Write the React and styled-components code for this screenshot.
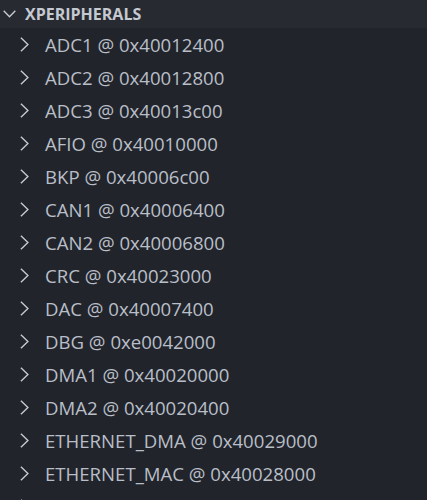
import React from "react";
import styled, { createGlobalStyle } from "styled-components";

const GlobalStyle = createGlobalStyle`
  html, body {
    margin: 0;
    padding: 0;
    background: #21252b;
    overflow: hidden;
  }
`;

const Panel = styled.div`
  width: 427px;
  height: 500px;
  background: #21252b;
  font-family: "Open Sans", "Noto Sans", sans-serif;
  overflow: hidden;
`;

const Header = styled.div`
  display: flex;
  align-items: center;
  height: 28px;
  background: #272a31;
  color: #c5c9d1;
  font-weight: 700;
  font-size: 16px;
  gap: 9px;
  padding-left: 3px;
`;

const List = styled.div`
  display: flex;
  flex-direction: column;
`;

const Row = styled.div`
  display: flex;
  align-items: center;
  height: 33px;
  padding-left: 20px;
  gap: 16px;
  color: #b9bec8;
  font-size: 18.6px;
  white-space: nowrap;
`;

const DownChevron = () => (
  <svg width="13" height="8" viewBox="0 0 13 8" fill="none">
    <path d="M0.7 0.8 L6.5 6.8 L12.3 0.8" stroke="#c5c9d1" strokeWidth="1.4" />
  </svg>
);

const RightChevron = () => (
  <svg width="9" height="15" viewBox="0 0 9 15" fill="none">
    <path d="M0.9 0.7 L7.9 7.5 L0.9 14.3" stroke="#c5c9d1" strokeWidth="1.4" />
  </svg>
);

const peripherals = [
  ["ADC1", "0x40012400"],
  ["ADC2", "0x40012800"],
  ["ADC3", "0x40013c00"],
  ["AFIO", "0x40010000"],
  ["BKP", "0x40006c00"],
  ["CAN1", "0x40006400"],
  ["CAN2", "0x40006800"],
  ["CRC", "0x40023000"],
  ["DAC", "0x40007400"],
  ["DBG", "0xe0042000"],
  ["DMA1", "0x40020000"],
  ["DMA2", "0x40020400"],
  ["ETHERNET_DMA", "0x40029000"],
  ["ETHERNET_MAC", "0x40028000"],
];

export default function App() {
  return (
    <Panel>
      <GlobalStyle />
      <Header>
        <DownChevron />
        XPERIPHERALS
      </Header>
      <List>
        {peripherals.map(([name, addr]) => (
          <Row key={name}>
            <RightChevron />
            {name} @ {addr}
          </Row>
        ))}
        <Row>
          <RightChevron />
        </Row>
      </List>
    </Panel>
  );
}
